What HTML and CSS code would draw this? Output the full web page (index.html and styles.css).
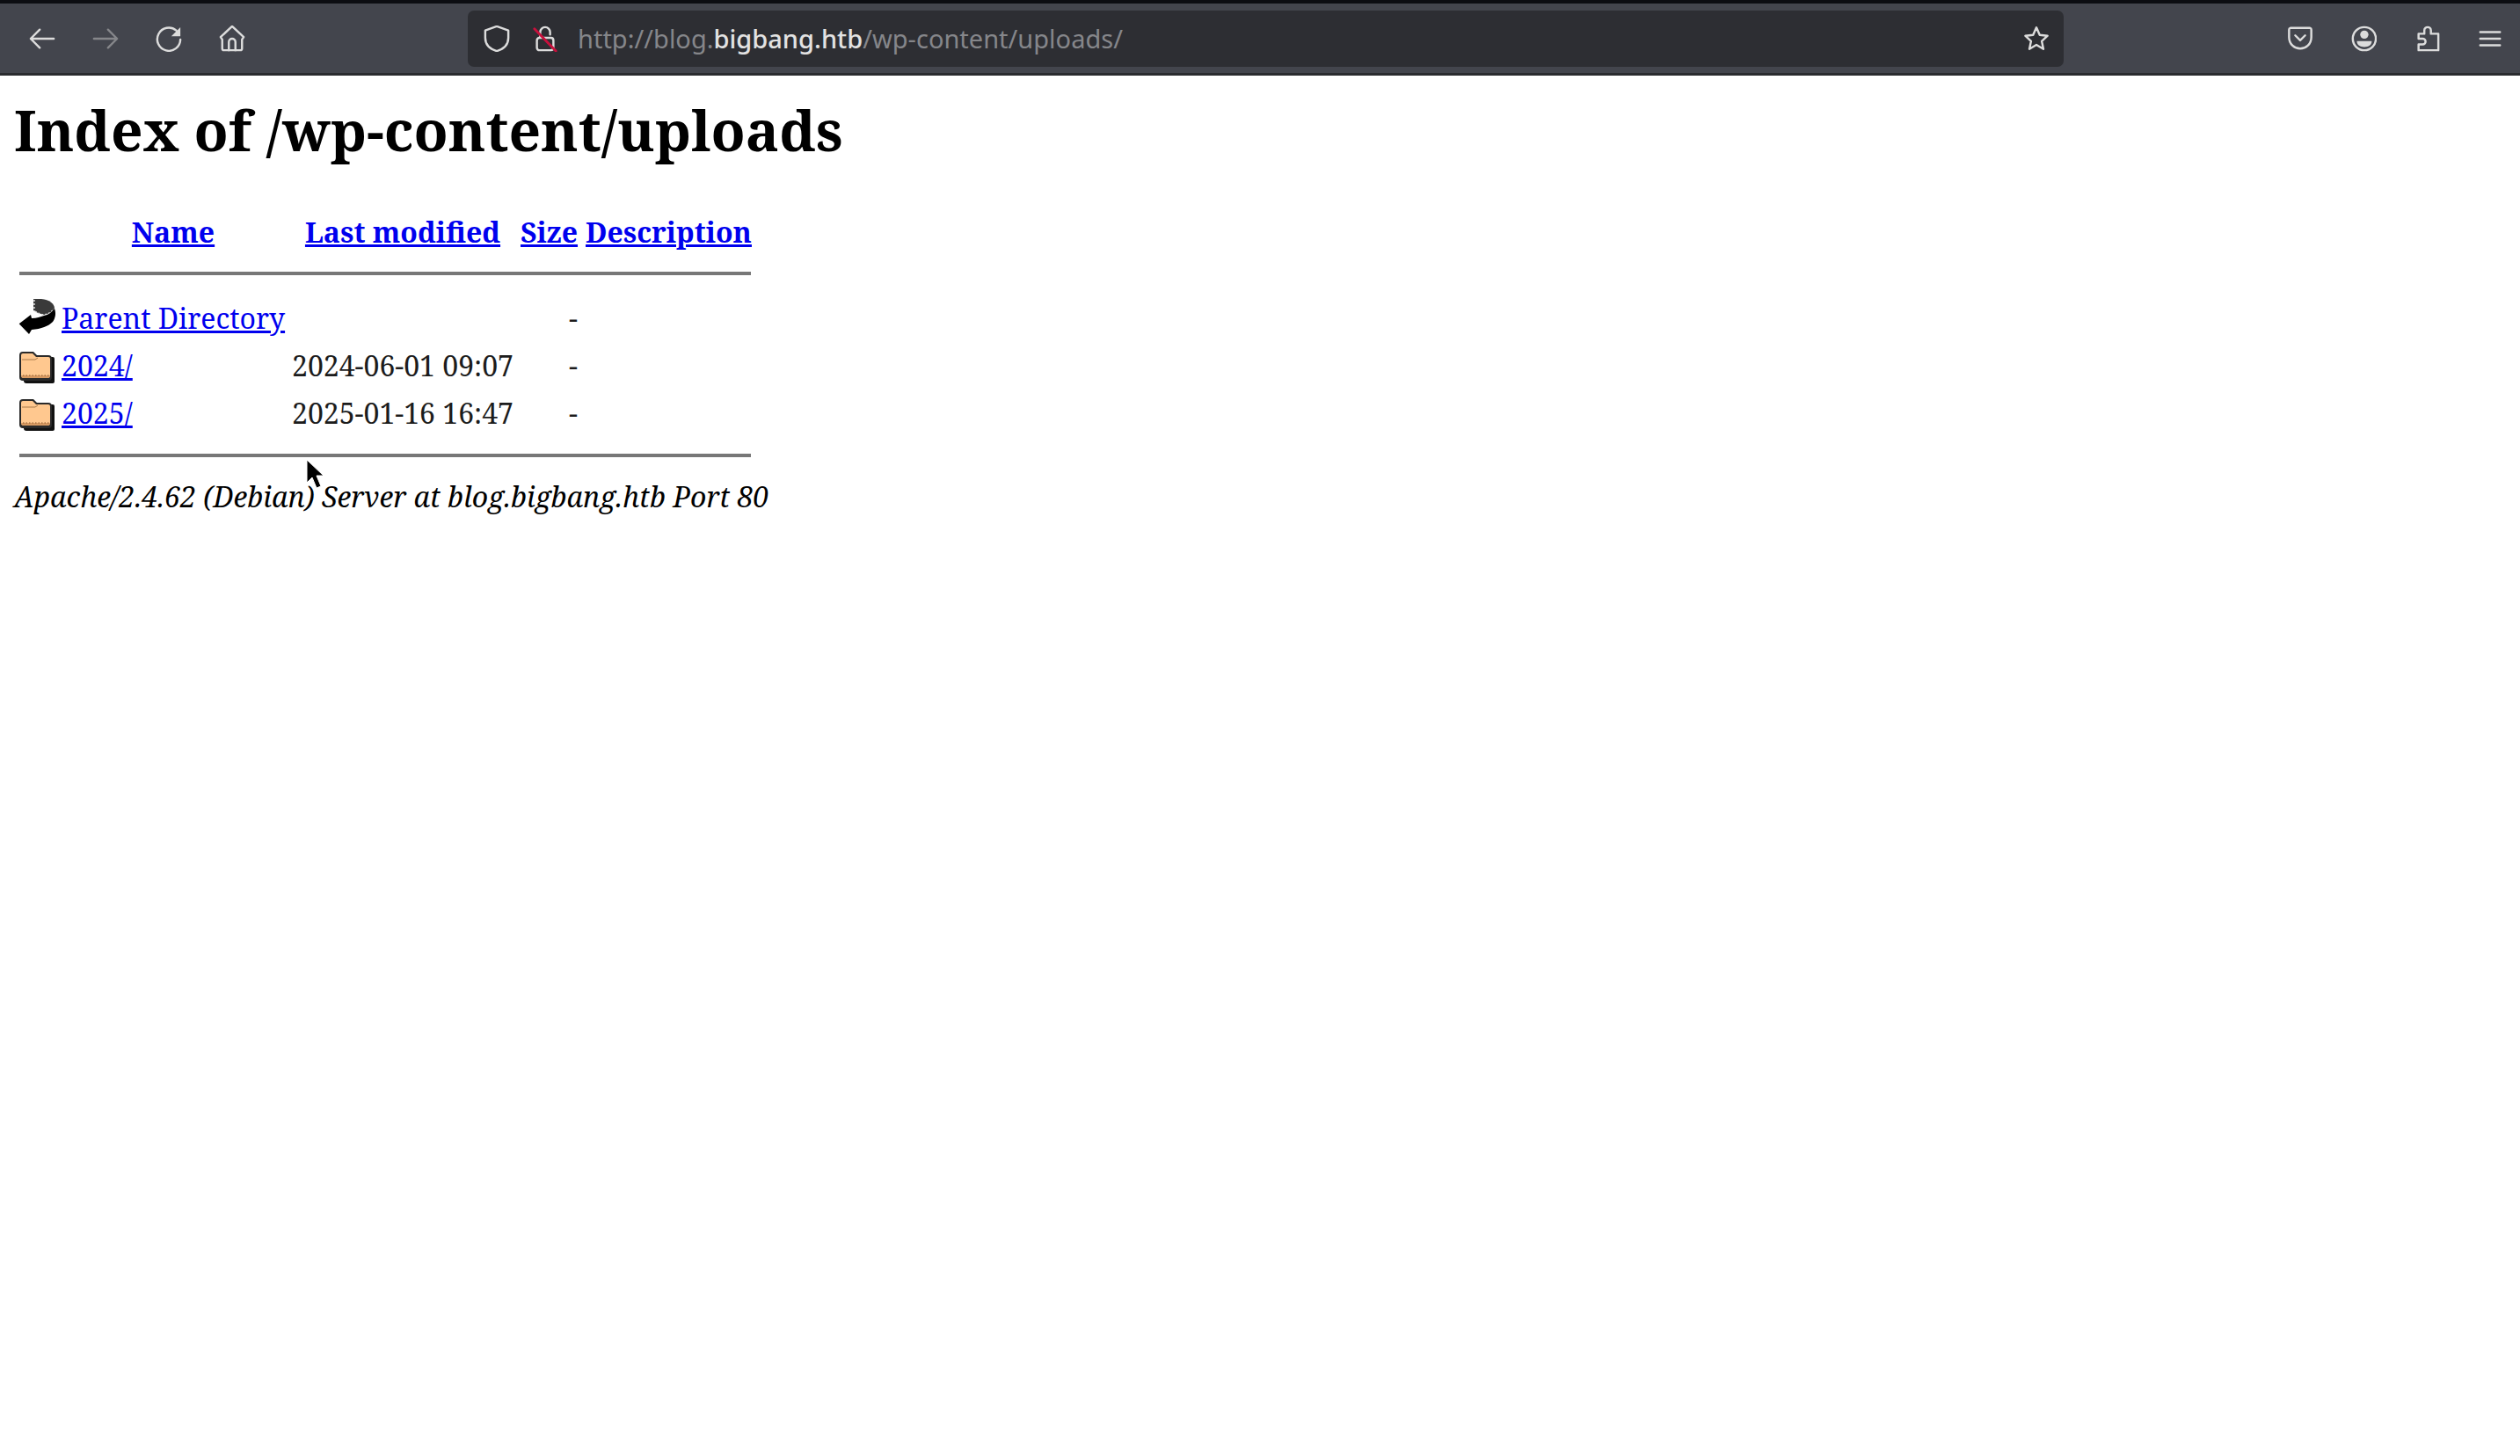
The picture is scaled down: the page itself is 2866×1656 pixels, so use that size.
FILE: index.html
```html
<!DOCTYPE html>
<html lang="en">
<head>
<meta charset="utf-8">
<title>Index of /wp-content/uploads</title>
<link rel="stylesheet" href="styles.css">
</head>
<body>
<header class="toolbar">
  <div class="nav">
    <svg class="icon" viewBox="0 0 32 32"><path d="M30 16H3M13 5 2 16l11 11"/></svg>
    <svg class="icon dim" viewBox="0 0 32 32"><path d="M2 16h27M19 5l11 11-11 11"/></svg>
    <svg class="icon" viewBox="0 0 32 32"><path d="M30 17a14 14 0 1 1-5-11"/><path class="solid" d="M30 2v11H19z"/></svg>
    <svg class="icon" viewBox="0 0 32 32"><path d="M2 14 16 1l14 13-2 3v11a2 2 0 0 1-2 2H6a2 2 0 0 1-2-2V17z"/><path d="M12 30V20a4 4 0 0 1 8 0v10"/></svg>
  </div>
  <div class="urlbar">
    <svg class="icon" viewBox="0 0 32 32"><path d="M16 1 2 6v9c0 9 7 14 14 16 7-2 14-7 14-16V6z"/></svg>
    <span class="lock">
      <svg class="icon" viewBox="0 0 32 32"><path d="M10 14V8a6 6 0 0 1 12 0v3"/><rect x="6" y="15" width="20" height="15" rx="3"/><path class="slash" d="M3 4l26 27"/></svg>
    </span>
    <span class="url">http://blog.<b>bigbang.htb</b>/wp-content/uploads/</span>
    <svg class="icon star" viewBox="0 0 32 32"><path d="M16 2.500l4 9 9.500 1-7 6.500 2 9.500-8.500-5-8.500 5 2-9.500-7-6.500 9.500-1z"/></svg>
  </div>
  <div class="tools">
    <svg class="icon" viewBox="0 0 32 32"><path d="M4 3h24a2 2 0 0 1 1.500 2v9c0 9-7 14-13.500 14S2.500 23 2.500 14V5A2 2 0 0 1 4 3z"/><path d="m10 12 6 6 6-6"/></svg>
    <svg class="icon" viewBox="0 0 32 32"><circle cx="17" cy="16" r="14"/><circle class="solid" cx="17" cy="11" r="5"/><path class="solid" d="M8 19h18c0 5-4 7-9 7s-9-2-9-7z"/></svg>
    <svg class="icon" viewBox="0 0 32 32"><path d="M6 10h7V6a4 4 0 0 1 8 0v4h9v20H6v-7h5a3.500 3.500 0 0 0 0-7H6z"/></svg>
    <svg class="icon" viewBox="0 0 32 32"><path d="M4 8h24M4 16h24M4 24h24"/></svg>
  </div>
</header>
<main class="page">
  <h1>Index of /wp-content/uploads</h1>
  <table class="listing">
    <colgroup><col class="c-icon"><col class="c-name"><col class="c-date"><col class="c-size"><col class="c-desc"></colgroup>
    <tr class="head">
      <th></th>
      <th><a href="#">Name</a></th>
      <th><a href="#">Last modified</a></th>
      <th class="right"><a href="#">Size</a></th>
      <th class="desc"><a href="#">Description</a></th>
    </tr>
    <tr class="rule rule-top"><th colspan="5"><hr></th></tr>
    <tr>
      <td class="ic"><svg class="back" viewBox="0 0 46 50"><path fill="#3a3a3a" d="M18 5h9c9 1 15 5 15 11-3 4-7 6-12 7-5-1-9-3-12-5z"/><path fill="none" stroke="#ddd" stroke-width="1.500" stroke-dasharray="2 2" d="M19 6v13M20 19c3 2 7 4 10 4 5-1 9-3 11-7"/><path fill="#000" d="M1.700 33.300 15 23l1 4c6 0 10-2 14-3 5-1 9-4 12-8 2 5 1 11-2 15-5 5-13 8-24 9l-3 5z"/></svg></td>
      <td><a href="#">Parent Directory</a></td>
      <td></td>
      <td class="right">-</td>
      <td></td>
    </tr>
    <tr>
      <td class="ic"><svg class="folder" viewBox="0 0 40 36"><use href="#folder"/></svg></td>
      <td><a href="#">2024/</a></td>
      <td>2024-06-01 09:07</td>
      <td class="right">-</td>
      <td></td>
    </tr>
    <tr>
      <td class="ic"><svg class="folder" viewBox="0 0 40 36"><use href="#folder"/></svg></td>
      <td><a href="#">2025/</a></td>
      <td>2025-01-16 16:47</td>
      <td class="right">-</td>
      <td></td>
    </tr>
    <tr class="rule"><th colspan="5"><hr></th></tr>
  </table>
  <address>Apache/2.4.62 (Debian) Server at blog.bigbang.htb Port 80</address>
</main>
<svg class="cursor" viewBox="0 0 22 36"><path fill="#000" stroke="#fff" stroke-width="1" d="M1 1v26l6-6 5 12 5-2-5-12h8z"/></svg>
<svg class="defs" width="0" height="0"><defs><g id="folder"><path fill="#111" d="M5 6h33a2 2 0 0 1 2 2v26a2 2 0 0 1-2 2H8a3 3 0 0 1-3-3z"/><path fill="#2a2a2a" d="M4 0h12l4 4h13a4 4 0 0 1 4 4v21a4 4 0 0 1-4 4H4a4 4 0 0 1-4-4V4a4 4 0 0 1 4-4z"/><path fill="#ffc88f" d="M4 2h11l4 4h14a2 2 0 0 1 2 2v19a3 3 0 0 1-3 3H5a3 3 0 0 1-3-3V4a2 2 0 0 1 2-2z"/><path fill="none" stroke="#a87a4a" stroke-width="1" d="M3 9h15l3-2"/><path fill="#d89a62" d="M2 27h33a3 3 0 0 1-3 3H5a3 3 0 0 1-3-3z"/><path fill="none" stroke="#8a5a30" stroke-width="1" stroke-dasharray="1.500 2" d="M4 27h30"/></g></defs></svg>
</body>
</html>
```
FILE: styles.css
```css
* { box-sizing: border-box; }
html, body { margin: 0; padding: 0; background: #fff; }
body { font-family: "Noto Serif", "DejaVu Serif Condensed", "DejaVu Serif", serif; font-size: 32px; color: #000; }
.toolbar { height: 86px; display: flex; align-items: center; background: #43454d; border-top: 4px solid #0c0d12; border-bottom: 3px solid #2a2b2f; }
.nav { display: flex; gap: 42px; padding-left: 33px; width: 532px; }
.icon { width: 30px; height: 30px; fill: none; stroke: #dcdcdc; stroke-width: 2.600; stroke-linejoin: round; stroke-linecap: round; flex: none; }
.icon.dim { stroke: #85868a; }
.icon .solid { fill: #dcdcdc; stroke: none; }
.icon .slash { stroke: #c8103c; stroke-width: 3; }
.urlbar { width: 1815px; height: 64px; background: #2d2e33; border-radius: 7px; display: flex; align-items: center; padding-left: 18px; padding-right: 16px; gap: 25px; }
.lock { display: flex; }
.url { flex: 1; font-family: "Noto Sans", sans-serif; font-size: 29px; color: #85868a; white-space: nowrap; margin-left: -3px; }
.url b { font-weight: 500; color: #e2e2e2; }
.tools { display: flex; gap: 42px; margin-left: 254px; }
.page { padding: 0 16px; }
h1 { font-size: 64px; font-weight: 700; margin: 24px 0 0; line-height: 76px; }
.listing { border-collapse: collapse; margin: 54px 0 0 6px; table-layout: fixed; width: 832px; }
.c-icon { width: 48px; } .c-name { width: 254px; } .c-date { width: 268px; } .c-size { width: 65px; } .c-desc { width: 197px; }
.listing th, .listing td { padding: 0; text-align: center; white-space: nowrap; line-height: 54px; height: 54px; vertical-align: middle; }
.listing td { text-align: left; color: #1c1c1c; }
.listing td:nth-child(3) { text-align: center; }
.listing .right { text-align: right; }
.listing .desc { padding-left: 9px; }
.listing .ic { line-height: 0; }
.listing .rule th { height: 41px; line-height: 0; }
.listing .rule-top th { height: 47px; padding-bottom: 1px; }
.listing .head th { height: 48px; line-height: 48px; }
hr { margin: 0; border: 0; height: 4px; background: #777; }
a { color: #00e; text-decoration: underline; }
.folder { width: 40px; height: 36px; display: block; margin-top: 3px; }
.back { width: 46px; height: 50px; display: block; margin: -4px 0 0 -2px; }
address { font-style: italic; line-height: 54px; }
.cursor { position: absolute; left: 348px; top: 522px; width: 22px; height: 36px; }
.defs { position: absolute; }
```
